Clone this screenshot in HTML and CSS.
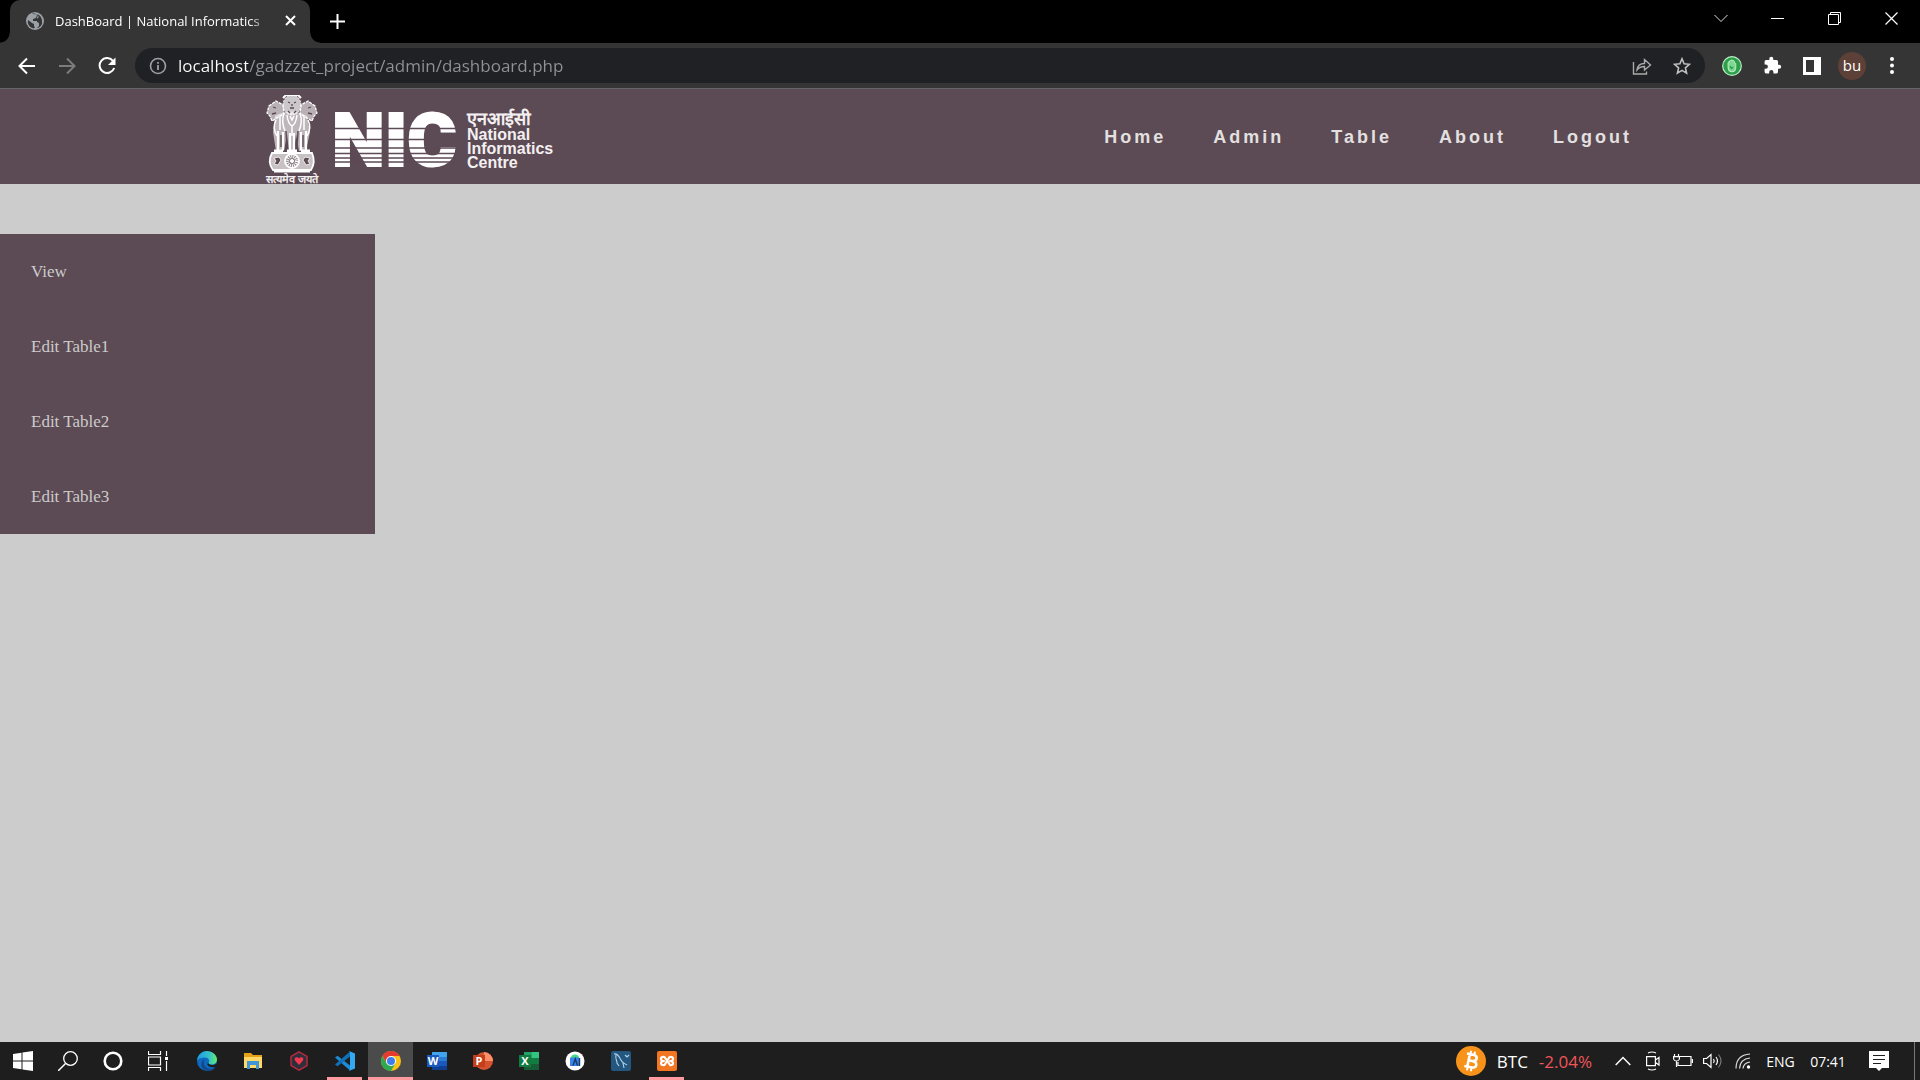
FILE: index.html
```
<!DOCTYPE html>
<html lang="en">
<head>
<meta charset="utf-8">
<meta name="viewport" content="width=device-width, initial-scale=1">
<title>DashBoard | National Informatics Centre</title>
<link rel="stylesheet" href="styles.css">
</head>
<body>
<header class="browser">
  <div class="tab-strip">
    <div class="tab">
      <svg class="favicon" width="18" height="18" viewBox="0 0 18 18"><circle cx="9" cy="9" r="9" fill="#9aa0a6"/><path d="M2 8l4 3 2 1v2l1 2C5 17 1 13 2 8zM6 2c2-1 4 0 5 1l-1 3-3 1v2h4l2 2h2l1-2c0-3-2-6-5-7 2 2 2 3 1 4l-1 4 2 1v3l-2 2c2 0 4-2 5-4V9l-3-1-2-2 1-3-4-1z" fill="#353535"/></svg>
      <span class="tab-title">DashBoard | National Informatics</span>
      <button class="tab-close" aria-label="Close tab"><svg width="11" height="11" viewBox="0 0 11 11"><path d="M1 1l9 9M10 1l-9 9" stroke="#fff" stroke-width="2"/></svg></button>
    </div>
    <button class="new-tab" aria-label="New tab"><svg width="15" height="15" viewBox="0 0 15 15"><path d="M7.500 0v15M0 7.500h15" stroke="#fff" stroke-width="2"/></svg></button>
    <div class="window-controls">
      <button aria-label="Search tabs"><svg width="14" height="9" viewBox="0 0 14 9"><path d="M.5 1L7 7.500 13.500 1" fill="none" stroke="#ddd"/></svg></button>
      <button aria-label="Minimize"><svg width="13" height="13" viewBox="0 0 13 13"><path d="M0 6.500h13" stroke="#fff"/></svg></button>
      <button aria-label="Restore"><svg width="13" height="13" viewBox="0 0 13 13"><path d="M.5 2.500h10v10H.5zM2.500 2V.5h10v10H11" fill="none" stroke="#fff"/></svg></button>
      <button aria-label="Close"><svg width="13" height="13" viewBox="0 0 13 13"><path d="M.5.5l12 12M12.500.5l-12 12" stroke="#fff" stroke-width="1.200"/></svg></button>
    </div>
  </div>
  <div class="toolbar">
    <button class="tool" aria-label="Back"><svg width="18" height="18" viewBox="0 0 18 18"><path d="M17 9H2M9 1.500L1.500 9 9 16.500" fill="none" stroke="#fff" stroke-width="2"/></svg></button>
    <button class="tool" aria-label="Forward"><svg width="18" height="18" viewBox="0 0 18 18"><path d="M1 9h15M9 1.500L16.500 9 9 16.500" fill="none" stroke="#7c7c7c" stroke-width="2"/></svg></button>
    <button class="tool" aria-label="Reload"><svg width="18" height="18" viewBox="0 0 18 18"><path d="M15 3.800A7.500 7.500 0 1 0 16.200 11" fill="none" stroke="#fff" stroke-width="2"/><path d="M17.500.5V8H10z" fill="#fff"/></svg></button>
    <div class="address">
      <svg width="18" height="18" viewBox="0 0 18 18"><circle cx="9" cy="9" r="7.500" fill="none" stroke="#9aa0a6" stroke-width="1.600"/><path d="M9 8v5M9 5v1.700" stroke="#9aa0a6" stroke-width="1.800"/></svg>
      <input class="url" type="text" aria-label="Address" value="localhost/gadzzet_project/admin/dashboard.php">
      <button class="tool" aria-label="Share"><svg width="20" height="18" viewBox="0 0 20 18"><path d="M1.500 5v12h13v-2.500M5 13c.5-4 3-6.500 7.500-6.500V2.500l6 5.500-6 5V9.500C9 9.500 7 10.500 5 13z" fill="none" stroke="#aaa" stroke-width="1.400"/></svg></button>
      <button class="tool" aria-label="Bookmark"><svg width="18" height="18" viewBox="0 0 18 18"><path d="M9 1.800l2.100 5 5.400.5-4.100 3.600 1.200 5.300L9 13.400l-4.600 2.800 1.200-5.300L1.500 7.300l5.400-.5z" fill="none" stroke="#c0c0c0" stroke-width="1.600"/></svg></button>
    </div>
    <div class="extensions">
      <button class="tool" aria-label="Ad blocker"><svg width="20" height="20" viewBox="0 0 20 20"><circle cx="10" cy="10" r="9.300" fill="#2e9e4b" stroke="#b9f0c4" stroke-width="1.200"/><path d="M6 9.500V6.500q.8-1 1.400 0V5q.9-1.200 1.600 0v-.6q1-1.200 1.700 0V5q1-1 1.600.2v2q1.300-.6 1.500.5V12q0 4-3.800 4T6 12z" fill="#7bd88f" stroke="#d8ffe0" stroke-width=".7"/><path d="M8 10l1.500 2.500L11 11" fill="none" stroke="#2e9e4b" stroke-width="1.400"/></svg></button>
      <button class="tool" aria-label="Extensions"><svg width="19" height="19" viewBox="0 0 24 24"><path d="M20.500 11H19V7a2 2 0 0 0-2-2h-4V3.500a2.500 2.500 0 0 0-5 0V5H4a2 2 0 0 0-2 2v3.800h1.500a2.700 2.700 0 0 1 0 5.400H2V20a2 2 0 0 0 2 2h3.800v-1.500a2.700 2.700 0 0 1 5.400 0V22H17a2 2 0 0 0 2-2v-4h1.500a2.500 2.500 0 0 0 0-5z" fill="#fff"/></svg></button>
      <button class="tool" aria-label="Side panel"><svg width="18" height="18" viewBox="0 0 18 18"><path d="M0 0h18v18H0zM3 3v12h8V3z" fill="#fff" fill-rule="evenodd"/></svg></button>
      <button class="tool" aria-label="Profile"><span class="avatar">bu</span></button>
      <button class="tool" aria-label="Menu"><svg width="4" height="17" viewBox="0 0 4 17"><g fill="#fff"><circle cx="2" cy="2" r="2"/><circle cx="2" cy="8.500" r="2"/><circle cx="2" cy="15" r="2"/></g></svg></button>
    </div>
  </div>
</header>

<div class="page">
  <header class="site-header">
    <a class="brand" href="#">
      <span class="emblem">
        <svg width="56" height="78" viewBox="0 0 56 78" fill="none" stroke="#fff">
          <path d="M11 21Q27 12 43 21L46 37 42 56H35L32 39 30 57H25L23 39 20 56H12L9 37z" fill="#ffffff99" stroke="none"/>
          <ellipse cx="28" cy="10" rx="9" ry="10" fill="#ffffffb0" stroke-width="1" stroke-dasharray="2 1"/>
          <path d="M19 3l3-3h12l3 3" stroke-width="2"/>
          <path d="M5 11l7-5 7 4 1 9-7 4-5 3-2-5-3-3zM51 11l-7-5-7 4-1 9 7 4 5 3 2-5 3-3z" fill="#ffffff90" stroke-width="1.300" stroke-dasharray="3 1"/>
          <path d="M20 18q-3 9 1 18M36 18q3 9-1 18M23 20q1 9 5 11 4-2 5-11M26 21l2 4 2-4M12 25q-4 8 1 16M44 25q4 8-1 16M16 22v13M40 22v13M28 31v10" stroke-width="1.500"/>
          <path d="M14 36v19M19 37v18M26 38v17M30 38v17M37 37v18M42 36v19" stroke-width="2.200"/>
          <path d="M10 56h9M23 56h10M37 56h9" stroke-width="3"/>
          <path d="M17 40v12M39 40v12M22 36l1 18M34 36l-1 18" stroke="#5c4a54" stroke-width="1.400"/>
          <path d="M24 7l2 1M30 8l2-1M26 13h4M24 16l2 2M32 16l-2 2M9 12l3 1M47 12l-3 1M8 19l4-1M48 19l-4-1M28 9v2" stroke="#5c4a54" stroke-width="1.300"/>
          <path d="M8 58h40q4 9-1 17H9Q3 67 8 58z" fill="#ffffffa8" stroke-width="1.800"/>
          <path d="M10 63l5-1 2 3-3 5-4-1 2-3zM46 63l-5-1-2 3 3 5 4-1-2-3z" fill="#5c4a54" stroke="#fff" stroke-width=".8"/>
          <circle cx="28" cy="66" r="7" fill="#8d8088" stroke-width="1.800"/>
          <circle cx="28" cy="66" r="4.500" stroke-width="3" stroke-dasharray="1 1"/><circle cx="28" cy="66" r="1.500" fill="#fff"/>
          <path d="M10 76.500h36" stroke-width="2"/>
        </svg>
        <span class="motto" lang="hi">सत्यमेव जयते</span>
      </span>
      <svg class="nic" width="124" height="57" viewBox="0 0 124 57" role="img" aria-label="NIC">
        <text class="nic-text" x="-2" y="55">NIC</text>
        <path d="M0 17.500h124M0 28.500h124M0 37h124M0 42.500h124M0 47h124M0 51h124" stroke="#5c4a54" stroke-width="1.500"/>
      </svg>
      <span class="brand-name">
        <span class="brand-hindi" lang="hi">एनआईसी</span>
        <span>National</span>
        <span>Informatics</span>
        <span>Centre</span>
      </span>
    </a>
    <nav class="site-nav">
      <a href="#">Home</a>
      <a href="#">Admin</a>
      <a href="#">Table</a>
      <a href="#">About</a>
      <a href="#">Logout</a>
    </nav>
  </header>
  <aside class="sidebar">
    <a href="#">View</a>
    <a href="#">Edit Table1</a>
    <a href="#">Edit Table2</a>
    <a href="#">Edit Table3</a>
  </aside>
</div>

<footer class="taskbar">
  <div class="system">
    <button aria-label="Start"><svg width="20" height="20" viewBox="0 0 20 20"><path d="M0 3l8.500-1.200v7.700H0zM9.500 1.600L20 0v9.500H9.500zM0 10.500h8.500v7.700L0 17zM9.500 10.500H20V20L9.500 18.400z" fill="#fff"/></svg></button>
    <button aria-label="Search"><svg width="20" height="20" viewBox="0 0 20 20"><circle cx="12.500" cy="7.500" r="6.800" fill="none" stroke="#fff" stroke-width="1.300"/><path d="M7.500 12.500L0 20" stroke="#fff" stroke-width="1.500"/></svg></button>
    <button aria-label="Cortana"><svg width="20" height="20" viewBox="0 0 20 20"><circle cx="10" cy="10" r="8.300" fill="none" stroke="#fff" stroke-width="2.600"/></svg></button>
    <button aria-label="Task view"><svg width="20" height="20" viewBox="0 0 20 20"><path d="M.5 0v3.500h12V0M.5 20v-3.500h12V20M.5 6h12v8H.5zM18.500 0v5M18.500 10v10" fill="none" stroke="#fff" stroke-width="1.200"/><path d="M17 6h3v3h-3z" fill="#fff"/></svg></button>
  </div>
  <div class="apps">
    <button aria-label="Edge"><svg width="20" height="20" viewBox="0 0 20 20"><defs><linearGradient id="edge" x1="0" x2="1"><stop stop-color="#1b9de2"/><stop offset=".6" stop-color="#35c1c9"/><stop offset="1" stop-color="#66eb6e"/></linearGradient></defs><circle cx="10" cy="10" r="10" fill="#1068bf"/><path d="M0 9.500C.5 4 5 0 10 0s10 4 10 8.500c0 3-2.500 5-5.500 5-2 0-3.500-.8-3-1.600 1.500-2 .5-5.400-3.500-5.400-3.500 0-7 1-8 3z" fill="url(#edge)"/><path d="M8 8c-3 4 0 10 6 10 2 0 3.500-.6 5-2-2 3-6 5-11 3.600C3 17 3 10 8 8z" fill="#114a8b"/><path d="M11.500 12c0 2 5 3 7.800.5l.7 1.500-2 2c-4 1-7-.5-8-3z" fill="#1e1e1e"/></svg></button>
    <button aria-label="File Explorer"><svg width="18" height="16" viewBox="0 0 18 16"><path d="M0 0h7l2 2h9v13H0z" fill="#e3a21a"/><path d="M0 4h18v11H0z" fill="#ffd867"/><path d="M3 8h12v8h-3v-4H6v4H3z" fill="#3e95d8"/></svg></button>
    <button aria-label="Game launcher"><svg width="18" height="20" viewBox="0 0 18 20"><path d="M9 .8l8 4.600v9.200l-8 4.600-8-4.600V5.400z" fill="#2f2f3b" stroke="#b92b3e" stroke-width="1.400"/><path d="M9 14L5 9.500Q4 6.500 6.500 6.200 8 6 9 7.600q1-1.600 2.500-1.400Q14 6.500 13 9.500z" fill="#f4384f"/></svg></button>
    <button class="open" aria-label="Visual Studio Code"><svg width="20" height="20" viewBox="0 0 20 20"><path d="M0 6.500L2.500 4.800 15 14.500v5z" fill="#1d8ad6"/><path d="M0 13.500l2.500 1.700L15 5.500v-5z" fill="#0f6fb8"/><path d="M14 0l6 2.500v15L14 20l1-1.500v-17z" fill="#32a9f0"/></svg></button>
    <button class="open active" aria-label="Chrome"><svg width="20" height="20" viewBox="0 0 20 20"><circle cx="10" cy="10" r="10" fill="#fbc116"/><path d="M1.340 5A10 10 0 0 1 18.660 5H10L5.700 12.500z" fill="#e33b2e"/><path d="M1.340 5A10 10 0 0 0 10 20l4.330-7.500-8.660 0z" fill="#2da94f"/><circle cx="10" cy="10" r="5" fill="#fff"/><circle cx="10" cy="10" r="4" fill="#3b7ded"/></svg></button>
    <button aria-label="Word"><svg width="20" height="20" viewBox="0 0 20 20"><path d="M5 1h15v5H5z" fill="#41a5ee"/><path d="M5 6h15v4H5z" fill="#2b7cd3"/><path d="M5 10h15v5H5z" fill="#185abd"/><path d="M5 15h15v4H5z" fill="#103f91"/><path d="M0 4h12v12H0z" fill="#185abd"/><text class="glyph" x="6" y="14">W</text></svg></button>
    <button aria-label="PowerPoint"><svg width="20" height="20" viewBox="0 0 20 20"><circle cx="11" cy="10" r="9" fill="#d35230"/><path d="M11 1a9 9 0 0 1 9 9h-9z" fill="#ff8f6b"/><path d="M0 4h12v12H0z" fill="#c43e1c"/><text class="glyph" x="6" y="14">P</text></svg></button>
    <button aria-label="Excel"><svg width="20" height="20" viewBox="0 0 20 20"><path d="M5 1h8v6H5z" fill="#21a366"/><path d="M13 1h7v6h-7z" fill="#33c481"/><path d="M5 7h15v6H5z" fill="#107c41"/><path d="M5 13h15v6H5z" fill="#185c37"/><path d="M0 4h12v12H0z" fill="#107c41"/><text class="glyph" x="6" y="14">X</text></svg></button>
    <button aria-label="Android Studio"><svg width="20" height="20" viewBox="0 0 20 20"><circle cx="10" cy="10" r="9.500" fill="#fff"/><path d="M6 7Q6 3.500 10 3.500T14 7z" fill="#3ddc84"/><path d="M5 6.500h9V15H5z" fill="#3b83e8"/><path d="M8 14.500L10.300 8l2.200 6.500M14.500 7v8" fill="none" stroke="#123c67" stroke-width="1.400"/></svg></button>
    <button aria-label="MySQL Workbench"><svg width="20" height="20" viewBox="0 0 20 20"><rect width="20" height="20" rx="2" fill="#24577f"/><path d="M3 3c4-1 5 3 7 6 1 3 3 3 6 5M5 4c-1 4 1 5 1 8l2 3M12 12l1 5M14 4l2 2 2-2" fill="none" stroke="#b4d4e8" stroke-width="1.100"/></svg></button>
    <button class="open" aria-label="XAMPP"><svg width="20" height="20" viewBox="0 0 20 20"><rect width="20" height="20" rx="2" fill="#f37623"/><path d="M13 14L7.500 6Q3.800 5.500 4 8t3 2q-3 0-3 2.200T7.500 14L12.500 6Q16.200 5.500 16 8t-3 2q3 0 3 2.200T13 14" fill="none" stroke="#fff" stroke-width="2.200" stroke-linecap="round" stroke-linejoin="round"/></svg></button>
  </div>
  <div class="tray">
    <button class="ticker">
      <svg width="30" height="30" viewBox="0 0 30 30"><circle cx="15" cy="15" r="15" fill="#f7931a"/><g transform="rotate(12 15 15)" fill="none" stroke="#fff"><path d="M9.500 8.500H16q4 0 4 3T16 14.700h-4M16 14.700q5 0 5 3.300t-5 3.200H9.500M12.500 8.500v12.700" stroke-width="2.600"/><path d="M13 5v3M17 5v3M13 21v4M17 21v4" stroke-width="2"/></g></svg>
      <span>BTC</span><span class="change">-2.04%</span>
    </button>
    <button class="status" aria-label="Show hidden icons"><svg width="16" height="10" viewBox="0 0 16 10"><path d="M.7 9L8 1.500 15.300 9" fill="none" stroke="#fff" stroke-width="1.500"/></svg></button>
    <button class="status" aria-label="Meet now"><svg width="16" height="20" viewBox="0 0 16 20"><path d="M1.600 5.600h8.800v9H1.600zM10.500 9l3.500-2.500v7.500L10.500 11.500M3 2q4-2 8 0M3 18q4 2 8 0" fill="none" stroke="#fff" stroke-width="1.200"/></svg></button>
    <button class="status" aria-label="Battery"><svg width="20" height="14" viewBox="0 0 20 14"><path d="M7 2.500h11v9H5V8M19.500 5v4M1.500 0v2.500M5.500 0v2.500M.6 2.600h5.800V5q-.4 2-2.900 2T.6 5zM3.500 7v6" fill="none" stroke="#fff" stroke-width="1.200"/></svg></button>
    <button class="status" aria-label="Volume"><svg width="20" height="16" viewBox="0 0 20 16"><path d="M.6 5.500h3L8 1.500v13l-4.400-4h-3zM10.500 6q1.500 2 0 4M13 4q3 4 0 8" fill="none" stroke="#fff" stroke-width="1.200"/><path d="M15.500 1.500q5 6.500 0 13" fill="none" stroke="#777" stroke-width="1.200"/></svg></button>
    <button class="status" aria-label="Network"><svg width="16" height="16" viewBox="0 0 16 16"><path d="M1 15.500Q1 2 15 1M4.500 15.500Q5 6 15 5M8 15.500Q8.500 10 15 9" fill="none" stroke="#ddd" stroke-width="1.200"/><circle cx="13.500" cy="14" r="1.700" fill="#fff"/></svg></button>
    <button class="language">ENG</button>
    <button class="clock">07:41</button>
    <button class="notifications" aria-label="Notifications"><svg width="20" height="20" viewBox="0 0 20 20"><path d="M0 0h20v17h-7l-3 3-3-3H0z" fill="#fff"/><path d="M4 4.500h12M4 8.500h12M4 12.500h8" stroke="#1e1e1e" stroke-width="1.200"/></svg></button>
    <button class="show-desktop" aria-label="Show desktop"></button>
  </div>
</footer>
</body>
</html>
```
FILE: styles.css
```
* { box-sizing: border-box; }

body {
  margin: 0;
  min-height: 100vh;
  display: flex;
  flex-direction: column;
  background: #ccc;
  font-family: "Open Sans", "Noto Sans", sans-serif;
}

button {
  display: flex;
  align-items: center;
  justify-content: center;
  padding: 0;
  border: 0;
  background: none;
  color: #fff;
  font: inherit;
}

a { text-decoration: none; }
svg { display: block; flex-shrink: 0; }

/* Browser window */
.tab-strip {
  display: flex;
  height: 43px;
  padding-left: 10px;
  background: #000;
}

.tab {
  position: relative;
  display: flex;
  align-items: center;
  width: 300px;
  padding: 0 12px 2px 16px;
  border-radius: 10px 10px 0 0;
  background: #353535;
  color: #fff;
}

.tab::before,
.tab::after {
  content: "";
  position: absolute;
  bottom: 0;
  width: 10px;
  height: 10px;
}
.tab::before { right: 100%; background: radial-gradient(circle at 0 0, #000 9px, #353535 10px); }
.tab::after { left: 100%; background: radial-gradient(circle at 100% 0, #000 9px, #353535 10px); }

.tab-title {
  flex: 1;
  margin-left: 11px;
  white-space: nowrap;
  font-size: 13px;
  line-height: 20px;
  mask-image: linear-gradient(to left, transparent, #000 24px);
}

.tab-close { width: 16px; height: 20px; margin-left: 9px; }
.new-tab { width: 55px; }

.window-controls {
  display: flex;
  height: 36px;
  margin-left: auto;
}
.window-controls button { width: 57px; }

.toolbar {
  display: flex;
  align-items: center;
  height: 46px;
  padding: 0 8px 0 7px;
  border-bottom: 1px solid #666;
  background: #353535;
}

.tool { width: 40px; height: 35px; }

.address {
  flex: 1;
  display: flex;
  align-items: center;
  height: 35px;
  margin: 0 7px 0 8px;
  padding: 0 3px 0 14px;
  border-radius: 18px;
  background: #202124;
}

.url {
  flex: 1;
  min-width: 0;
  margin-left: 11px;
  padding: 0;
  border: 0;
  outline: 0;
  background: linear-gradient(to right, #fff 70px, #8f9296 70px) text;
  color: transparent;
  font: 17px/24px "Open Sans", "Noto Sans", sans-serif;
}

.extensions { display: flex; }

.avatar {
  width: 28px;
  height: 28px;
  border-radius: 50%;
  background: #5d4037;
  font-size: 15px;
  line-height: 27px;
}

/* Page */
.page {
  flex: 1;
  display: flex;
  flex-direction: column;
  align-items: flex-start;
  gap: 50px;
}

.site-header {
  align-self: stretch;
  display: flex;
  align-items: center;
  justify-content: space-between;
  height: 95px;
  padding: 0 288px 0 263px;
  background: #5c4a54;
  font-family: "Liberation Sans", Arial, sans-serif;
  font-weight: 700;
}

.brand {
  display: flex;
  align-items: center;
  height: 95px;
  padding-top: 6px;
  overflow: hidden;
  color: #f4f0f2;
}

.emblem {
  align-self: flex-start;
  display: flex;
  flex-direction: column;
  align-items: center;
  width: 58px;
}

.motto {
  white-space: nowrap;
  font-size: 11px;
  line-height: 12px;
}

.nic { margin: 0 9px 0 13px; overflow: visible; }

.nic-text {
  fill: #fff;
  stroke: #fff;
  stroke-width: 2px;
  font: 900 75px Roboto, sans-serif;
}

.brand-name {
  display: flex;
  flex-direction: column;
  font-size: 16px;
  line-height: 14px;
}
.brand-hindi { font-size: 18px; line-height: 18px; }

.site-nav { display: flex; gap: 47px; }
.site-nav a {
  color: #e3e0e0;
  font-size: 18px;
  line-height: 24px;
  letter-spacing: 3px;
}

.sidebar {
  display: flex;
  flex-direction: column;
  width: 375px;
  background: #5c4a54;
}
.sidebar a {
  padding: 0 31px;
  color: #ccc;
  font: 17px/75px "Liberation Serif", "Times New Roman", serif;
}

/* Taskbar */
.taskbar {
  display: flex;
  height: 38px;
  background: #1e1e1e;
}

.system, .apps, .tray { display: flex; }
.system button { width: 45px; }
.apps { gap: 1px; margin-left: 4px; }
.apps button { position: relative; width: 45px; }
.apps .active { background: #4b4b4b; }

.open::after {
  content: "";
  position: absolute;
  left: 5px;
  right: 5px;
  bottom: 0;
  height: 3px;
  background: #ff9a9e;
}
.active::after { left: 0; right: 0; }

.glyph {
  fill: #fff;
  font: 700 11px "Open Sans", sans-serif;
  text-anchor: middle;
}

.tray { margin-left: auto; }

.ticker {
  gap: 11px;
  padding-right: 16px;
  font-size: 17px;
}
.change { color: #f0555a; }
.status { width: 30px; }
.language, .clock { font-size: 14px; }
.language { width: 45px; }
.clock { width: 50px; }
.notifications { width: 52px; }
.show-desktop {
  width: 6px;
  margin-left: 9px;
  border-left: 1px solid #777;
}
```
